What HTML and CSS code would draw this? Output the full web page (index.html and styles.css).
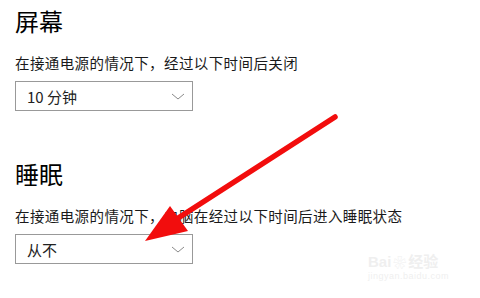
FILE: index.html
```html
<!DOCTYPE html>
<html lang="zh-CN">
<head>
<meta charset="UTF-8" />
<title>电源和睡眠</title>
<link rel="stylesheet" href="styles.css">
</head>
<body>
<div class="page">
  <section class="group">
    <h2 class="title">屏幕</h2>
    <p class="desc">在接通电源的情况下，经过以下时间后关闭</p>
    <div class="combo">
      <span>10 分钟</span>
      <svg class="chev" width="14" height="7" viewBox="0 0 14 7"><path d="M1 1 L7 6 L13 1" fill="none" stroke="#8a8a8a" stroke-width="1"/></svg>
    </div>
  </section>

  <section class="group second">
    <h2 class="title">睡眠</h2>
    <p class="desc">在接通电源的情况下，电脑在经过以下时间后进入睡眠状态</p>
    <div class="combo">
      <span>从不</span>
      <svg class="chev" width="14" height="7" viewBox="0 0 14 7"><path d="M1 1 L7 6 L13 1" fill="none" stroke="#8a8a8a" stroke-width="1"/></svg>
    </div>
  </section>
</div>

<svg class="arrow" width="480" height="298" viewBox="0 0 480 298">
  <line x1="335" y1="117" x2="172" y2="222" stroke="#f20d0d" stroke-width="5.5" stroke-linecap="round"/>
  <polygon points="145,241 170,206 188,231" fill="#f20d0d"/>
</svg>

<div class="mark">
  <div class="mark-top">Bai<span class="paw">❀</span>经验</div>
  <div class="mark-url">jingyan.baidu.com</div>
</div>
</body>
</html>
```

FILE: styles.css
```css
body { margin: 0; background: #fff; font-family: "Noto Sans CJK SC", "Noto Sans", sans-serif; color: #111; }
.page { padding: 5px 15px 0 15px; }
.title { margin: 0; font-size: 24px; line-height: 32px; font-weight: normal; color: #000; }
.desc { margin: 16px 0 0 0; font-size: 14.5px; line-height: 20px; color: #1a1a1a; letter-spacing: 0.4px; }
.combo { box-sizing: border-box; width: 178px; height: 30px; margin-top: 8px; border: 1px solid #999; display: flex; align-items: center; justify-content: space-between; padding: 0 7px 0 11px; font-size: 15px; color: #222; }
.chev { display: block; }
.second { margin-top: 47px; }
.arrow { position: absolute; left: 0; top: 0; pointer-events: none; }
.mark { position: absolute; left: 368px; top: 254px; color: #efefef; font-family: "Liberation Sans", "Noto Sans CJK SC", sans-serif; }
.mark-top { font-size: 15px; line-height: 16px; font-weight: bold; }
.paw { font-size: 13px; margin: 0 2px; }
.mark-url { font-size: 9px; line-height: 11px; letter-spacing: 0.5px; }
```
